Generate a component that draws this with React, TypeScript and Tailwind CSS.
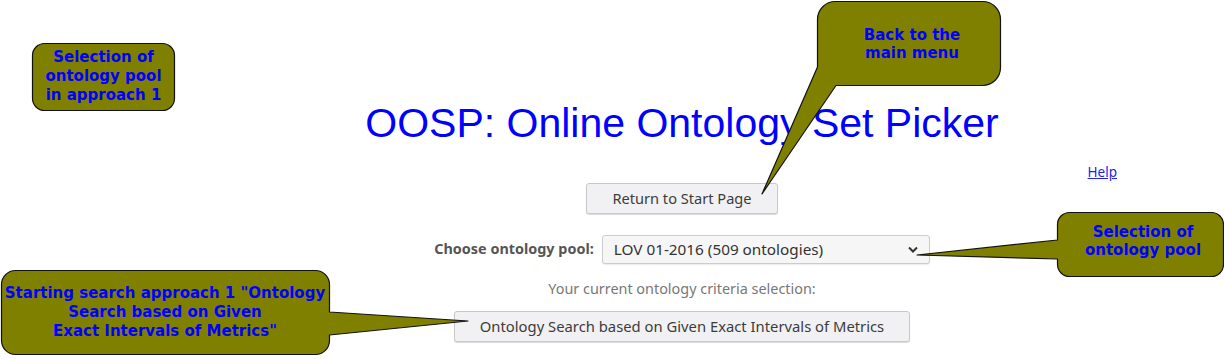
import React from "react";

const calloutText =
  "absolute text-center font-['DejaVu_Sans',sans-serif] font-bold text-[15px] text-[#0000ff] whitespace-nowrap";

export default function App() {
  return (
    <div className="relative w-[1224px] h-[359px] overflow-hidden bg-white">
      <div className="pl-[140px] pt-[103px] flex flex-col items-center font-['Noto_Sans',sans-serif]">
        <h1 className="text-[41px] leading-none text-[#0000ff] font-['Liberation_Sans',Arial,sans-serif] whitespace-nowrap">
          OOSP: Online Ontology Set Picker
        </h1>
        <div className="w-full flex justify-end pr-[107px] mt-[19px]">
          <a href="#" className="text-[13.5px] leading-[18px] underline text-[#2222ee]">
            Help
          </a>
        </div>
        <button className="mt-[2px] h-[31px] px-[25px] rounded-[3px] border border-[#c9c9cc] bg-[#f1f1f3] text-[14.6px] leading-none text-[#3c3c3c] shadow-[0_1px_1px_rgba(0,0,0,0.15)] whitespace-nowrap">
          Return to Start Page
        </button>
        <div className="mt-[21px] flex items-center gap-2">
          <span className="text-[14.4px] leading-none font-bold text-[#555555] whitespace-nowrap">Choose ontology pool:</span>
          <div className="w-[328px] h-[29px] border border-[#cccccc] rounded-[3px] bg-[#f6f6f7] pl-[11px] pr-[11px] flex items-center justify-between text-[15.3px] leading-none text-[#333333] shadow-[0_1px_1px_rgba(0,0,0,0.08)]">
            <span className="whitespace-nowrap">LOV 01-2016 (509 ontologies)</span>
            <svg width="10" height="7" viewBox="0 0 10 7">
              <polyline points="1,1.5 5,5.5 9,1.5" fill="none" stroke="#333" strokeWidth="2" />
            </svg>
          </div>
        </div>
        <p className="mt-[16px] text-[14.4px] leading-[18px] text-[#777777] whitespace-nowrap">Your current ontology criteria selection:</p>
        <button className="mt-[13px] h-[31px] px-[25px] rounded-[3px] border border-[#c9c9cc] bg-[#f1f1f3] text-[14.8px] leading-none text-[#3c3c3c] shadow-[0_1px_1px_rgba(0,0,0,0.15)] whitespace-nowrap">
          Ontology Search based on Given Exact Intervals of Metrics
        </button>
      </div>

      <svg className="absolute left-0 top-0 pointer-events-none" width="1224" height="359" viewBox="0 0 1224 359">
        <g fill="#808000" stroke="#111" strokeWidth="1.2" strokeLinejoin="round">
          <path d="M44.5 43.5 H162.5 A12 12 0 0 1 174.5 55.5 V98.5 A12 12 0 0 1 162.5 110.5 H44.5 A12 12 0 0 1 32.5 98.5 V55.5 A12 12 0 0 1 44.5 43.5 Z" />
          <path d="M836 85.5 H982.5 A18 18 0 0 0 1000.5 67.5 V19.5 A18 18 0 0 0 982.5 1.5 H835.5 A18 18 0 0 0 817.5 19.5 V67 L762 194 Z" />
          <path d="M1069.5 212.5 H1211.5 A12 12 0 0 1 1223.5 224.5 V264.5 A12 12 0 0 1 1211.5 276.5 H1069.5 A12 12 0 0 1 1057.5 264.5 V259 L917 255 L1057.5 240 V224.5 A12 12 0 0 1 1069.5 212.5 Z" />
          <path d="M15.5 270.5 H315.5 A14 14 0 0 1 329.5 284.5 V312 L468 321 L329.5 335 V340.5 A14 14 0 0 1 315.5 354.5 H15.5 A14 14 0 0 1 1.5 340.5 V284.5 A14 14 0 0 1 15.5 270.5 Z" />
        </g>
      </svg>

      <div className={`${calloutText} left-[32px] top-[43px] w-[143px] h-[67px] leading-[19px] flex flex-col justify-center`}>
        <div>Selection of</div>
        <div>ontology pool</div>
        <div>in approach 1</div>
      </div>
      <div className={`${calloutText} left-[820px] top-[26px] w-[184px] leading-[18px]`}>
        <div>Back to the</div>
        <div>main menu</div>
      </div>
      <div className={`${calloutText} left-[1060px] top-[223px] w-[166px] leading-[18px]`}>
        <div>Selection of</div>
        <div>ontology pool</div>
      </div>
      <div className={`${calloutText} left-0 top-[284px] w-[330px] leading-[19px]`}>
        <div>Starting search approach 1 "Ontology</div>
        <div>Search based on Given</div>
        <div>Exact Intervals of Metrics"</div>
      </div>
    </div>
  );
}
